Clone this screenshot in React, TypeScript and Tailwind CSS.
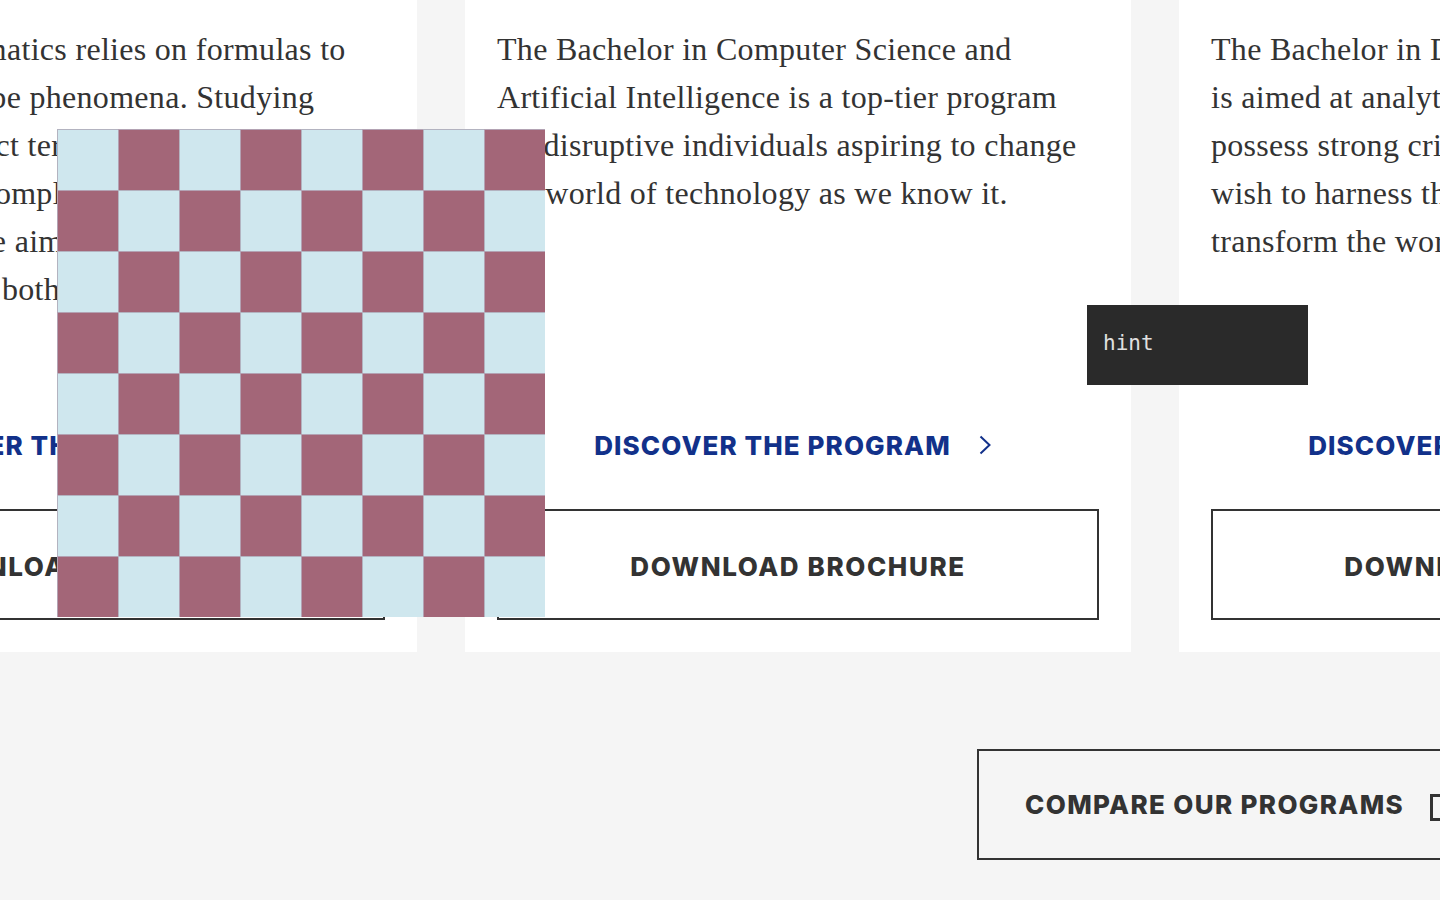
const serif = { fontFamily: '"Liberation Serif", "DejaVu Serif", serif' };
const sans = { fontFamily: 'Inter, "Open Sans", sans-serif' };

interface ProgramCardProps {
  lines: string[];
}

function ProgramCard({ lines }: ProgramCardProps) {
  return (
    <div className="w-[666px] h-[652px] shrink-0 bg-white px-8 pt-[25px] pb-8 flex flex-col">
      <p className="text-[32px] leading-[48px] tracking-[0.3px] text-[#333]" style={serif}>
        {lines.map((line, i) => (
          <span key={i} className="block whitespace-nowrap">
            {line}
          </span>
        ))}
      </p>
      <div className="mt-auto">
        <a
          href="#"
          className="h-12 mb-10 flex items-center justify-center gap-[28px] pr-[11px] text-[26px] font-extrabold tracking-[1.1px] text-[#12318a]"
          style={sans}
        >
          <span>DISCOVER THE PROGRAM</span>
          <svg width="12" height="20" viewBox="0 0 12 20" fill="none" className="shrink-0">
            <path d="M1.5 1.5 L10.5 10 L1.5 18.5" stroke="#12318a" strokeWidth="2" />
          </svg>
        </a>
        <button
          className="w-full h-[111px] border-2 border-[#333] bg-white pt-[3px] text-[26px] font-extrabold tracking-[1.6px] text-[#333]"
          style={sans}
        >
          DOWNLOAD BROCHURE
        </button>
      </div>
    </div>
  );
}

function Checkerboard() {
  const cells = Array.from({ length: 64 }, (_, i) => i);
  return (
    <div className="absolute left-[57px] top-[129px] grid grid-cols-8 w-[488px] h-[488px]">
      {cells.map((i) => {
        const row = Math.floor(i / 8);
        const col = i % 8;
        const dark = (row + col) % 2 === 1;
        return (
          <div
            key={i}
            className={
              dark
                ? "bg-[#a36678] shadow-[inset_1px_1px_0_#b3a2b3]"
                : "bg-[#cfe7ee] shadow-[inset_1px_1px_0_#b3b3c0]"
            }
          />
        );
      })}
    </div>
  );
}

export default function App() {
  return (
    <div className="relative w-[1440px] h-[900px] overflow-hidden bg-[#f5f5f5]">
      <div className="flex gap-12 -ml-[249px]">
        <ProgramCard
          lines={[
            "Abstract mathematics relies on formulas to",
            "chart and describe phenomena. Studying",
            "Some use abstract terms to explain",
            "solve the most complex problems. The",
            "Our seminars are aimed at students with",
            "a real interest in both theory and practice.",
          ]}
        />
        <ProgramCard
          lines={[
            "The Bachelor in Computer Science and",
            "Artificial Intelligence is a top-tier program",
            "for disruptive individuals aspiring to change",
            "the world of technology as we know it.",
          ]}
        />
        <ProgramCard
          lines={[
            "The Bachelor in Data Science and Economics",
            "is aimed at analytical minds who",
            "possess strong critical skills and",
            "wish to harness the power of data to",
            "transform the world.",
          ]}
        />
      </div>

      <div className="mt-[97px] ml-[977px] flex">
        <button
          className="h-[111px] shrink-0 border-2 border-[#333] pl-[46px] pr-12 flex items-center gap-[26px] text-[26px] font-extrabold tracking-[1.35px] text-[#333]"
          style={sans}
        >
          <span className="whitespace-nowrap">COMPARE OUR PROGRAMS</span>
          <span className="w-[27px] h-[27px] border-[3px] border-[#333] mt-[6px]" />
        </button>
      </div>

      <Checkerboard />

      <div
        className="absolute left-[1087px] top-[305px] w-[221px] h-[80px] bg-[#2a2a2a] text-[#e0e0e0] text-[21px] px-4 pt-[23px]"
        style={{ fontFamily: '"DejaVu Sans Mono", monospace' }}
      >
        hint
      </div>
    </div>
  );
}
